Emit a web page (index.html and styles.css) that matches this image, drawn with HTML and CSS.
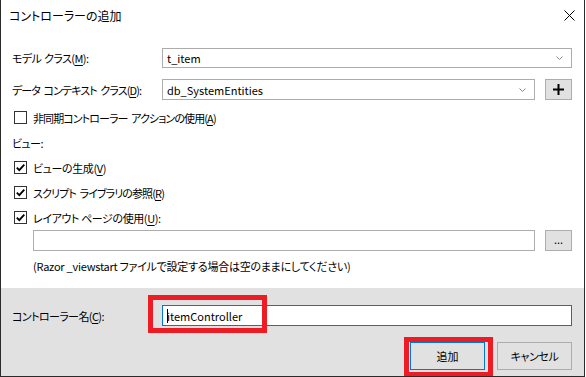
FILE: index.html
```html
<!DOCTYPE html>
<html lang="ja">
<head>
<meta charset="utf-8">
<title>コントローラーの追加</title>
<link rel="stylesheet" href="styles.css">
</head>
<body>
<div class="dialog">
  <div class="titlebar">
    <span class="title">コントローラーの追加</span>
    <svg class="close" width="11" height="11" viewBox="0 0 11 11"><path d="M0.5 0.5 L10.5 10.5 M10.5 0.5 L0.5 10.5" stroke="#000" stroke-width="1" fill="none"/></svg>
  </div>
  <div class="content">
    <div class="row row-first">
      <span class="label tight">モデル クラス(<u>M</u>):</span>
      <div class="combo combo-wide"><span>t_item</span><svg class="chev" width="7" height="4" viewBox="0 0 7 4"><path d="M0.5 0.5 L3.5 3.5 L6.5 0.5" stroke="#888" fill="none"/></svg></div>
    </div>
    <div class="row row-second">
      <span class="label tighter">データ コンテキスト クラス(<u>D</u>):</span>
      <div class="combo combo-short"><span>db_SystemEntities</span><svg class="chev" width="7" height="4" viewBox="0 0 7 4"><path d="M0.5 0.5 L3.5 3.5 L6.5 0.5" stroke="#888" fill="none"/></svg></div>
      <div class="btn-small"><svg width="11" height="11" viewBox="0 0 11 11"><path d="M5.5 0 V11 M0 5.5 H11" stroke="#000" stroke-width="2" fill="none"/></svg></div>
    </div>
    <div class="check-row check-first">
      <span class="box"></span>
      <span class="tighter">非同期コントローラー アクションの使用(<u>A</u>)</span>
    </div>
    <div class="check-row">
      <span class="tight">ビュー:</span>
    </div>
    <div class="check-row">
      <span class="box"><svg width="11" height="11" viewBox="0 0 11 11"><path d="M1.8 5.6 L4.3 8.2 L9.3 2.6" stroke="#000" stroke-width="1.8" fill="none"/></svg></span>
      <span class="loose">ビューの生成(<u>V</u>)</span>
    </div>
    <div class="check-row">
      <span class="box"><svg width="11" height="11" viewBox="0 0 11 11"><path d="M1.8 5.6 L4.3 8.2 L9.3 2.6" stroke="#000" stroke-width="1.8" fill="none"/></svg></span>
      <span class="tighter">スクリプト ライブラリの参照(<u>R</u>)</span>
    </div>
    <div class="check-row">
      <span class="box"><svg width="11" height="11" viewBox="0 0 11 11"><path d="M1.8 5.6 L4.3 8.2 L9.3 2.6" stroke="#000" stroke-width="1.8" fill="none"/></svg></span>
      <span class="loose">レイアウト ページの使用(<u>U</u>):</span>
    </div>
    <div class="layout-row">
      <div class="field"></div>
      <div class="btn-small btn-dots">...</div>
    </div>
    <div class="note">(Razor _viewstart ファイルで設定する場合は空のままにしてください)</div>
  </div>
  <div class="footer">
    <div class="name-row">
      <span class="label tight">コントローラー名(<u>C</u>):</span>
      <div class="name-input"><span class="caret"></span>itemController</div>
    </div>
    <div class="buttons">
      <div class="btn btn-default">追加</div>
      <div class="btn loose">キャンセル</div>
    </div>
  </div>
  <div class="mark mark-input"></div>
  <div class="mark mark-button"></div>
</div>
</body>
</html>
```
FILE: styles.css
```css
* { box-sizing: border-box; }
html, body {
  margin: 0;
  padding: 0;
  background: #fff;
}
body {
  font-family: "Noto Sans CJK JP", sans-serif;
  font-size: 11px;
  color: #000;
  font-feature-settings: "palt";
  white-space: nowrap;
}
u { text-decoration: underline; text-underline-offset: 2px; }
.loose { letter-spacing: -0.4px; }
.tight { letter-spacing: -0.6px; word-spacing: 1px; }
.tighter { letter-spacing: -0.9px; word-spacing: 2px; }
.dialog {
  position: relative;
  width: 585px;
  height: 377px;
  border-left: 1px solid #2b2b2b;
  border-right: 1px solid #2b2b2b;
  border-bottom: 1px solid #2b2b2b;
  display: flex;
  flex-direction: column;
  overflow: hidden;
}
.titlebar {
  height: 30px;
  display: flex;
  align-items: center;
  justify-content: space-between;
  padding: 0 9px 0 8px;
}
.title { font-size: 12px; }
.close { display: block; }
.content {
  padding: 18px 12px 0 11px;
  flex: 1;
  display: flex;
  flex-direction: column;
}
.row {
  display: flex;
  align-items: center;
}
.row-first { height: 20px; }
.row-second { height: 21px; margin-top: 11px; }
.label { width: 150px; flex: none; }
.combo {
  height: 100%;
  border: 1px solid #acacac;
  display: flex;
  align-items: center;
  justify-content: space-between;
  padding: 0 8px 0 4px;
}
.combo-wide { width: 410px; }
.combo-short { width: 374px; }
.btn-small {
  width: 27px;
  height: 21px;
  margin-left: 10px;
  background: #e1e1e1;
  border: 1px solid #adadad;
  display: flex;
  align-items: center;
  justify-content: center;
}
.btn-dots { font-size: 11px; line-height: 1; padding-bottom: 2px; }
.check-row {
  height: 25px;
  display: flex;
  align-items: center;
  gap: 6px;
}
.check-first { margin-top: 5px; }
.box {
  width: 13px;
  height: 13px;
  margin-left: 2px;
  border: 1px solid #333;
  background: #fff;
  display: flex;
  align-items: center;
  justify-content: center;
}
.box svg { display: block; }
.layout-row {
  display: flex;
  height: 21px;
  margin-left: 21px;
}
.field {
  width: 503px;
  height: 21px;
  border: 1px solid #acacac;
}
.note {
  margin-left: 21px;
  margin-top: 3px;
  height: 24px;
  display: flex;
  align-items: center;
  letter-spacing: -0.25px;
}
.footer {
  height: 88px;
  background: #e1e1e1;
  padding: 17px 12px 0 11px;
  display: flex;
  flex-direction: column;
}
.name-row {
  display: flex;
  align-items: center;
  height: 21px;
}
.name-input {
  width: 410px;
  height: 21px;
  background: #fff;
  border: 1px solid #0078d7;
  display: flex;
  align-items: center;
  padding-left: 4px;
}
.caret {
  width: 1px;
  height: 14px;
  background: #000;
  margin-right: -1px;
}
.buttons {
  margin-top: 16px;
  display: flex;
  justify-content: flex-end;
  gap: 12px;
}
.btn {
  width: 75px;
  height: 28px;
  background: #e1e1e1;
  border: 1px solid #adadad;
  display: flex;
  align-items: center;
  justify-content: center;
}
.btn-default { border-color: #0078d7; }
.mark {
  position: absolute;
  border: 5px solid #ed1c24;
}
.mark-input { left: 147px; top: 295px; width: 119px; height: 38px; }
.mark-button { left: 403px; top: 337px; width: 89px; height: 40px; }
```
